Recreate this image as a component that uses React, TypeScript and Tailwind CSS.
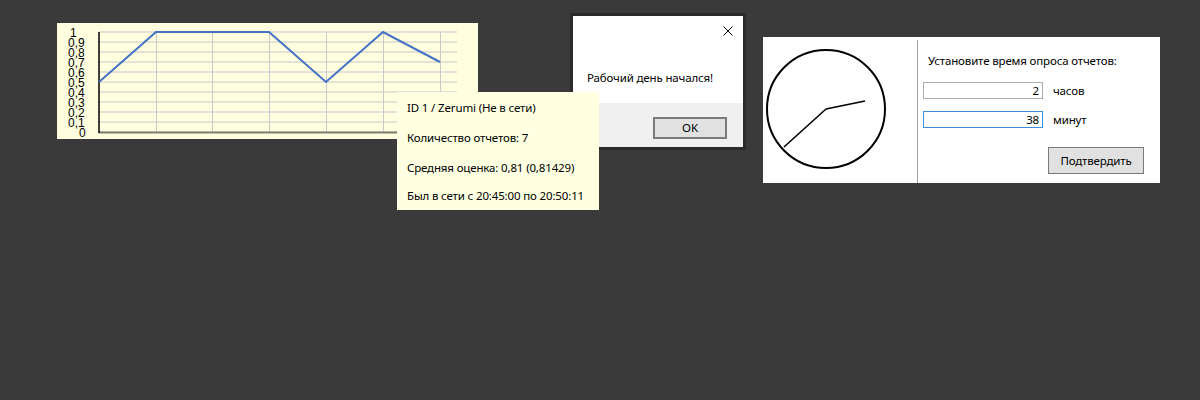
const FONT = { fontFamily: '"Noto Sans", "Open Sans", sans-serif' };

/** Chart values, one per vertical grid line. */
const POINTS = [0.5, 1, 1, 1, 0.5, 1, 0.7];
const GRID_X = [42, 99, 155, 212, 269, 326, 383];
const Y_LABELS = ['1', '0,9', '0,8', '0,7', '0,6', '0,5', '0,4', '0,3', '0,2', '0,1', '0'];

function ChartPanel() {
  const line = POINTS.map((v, i) => `${GRID_X[i]},${109 - v * 100}`).join(' ');
  return (
    <div className="absolute left-[57px] top-[23px] w-[421px] h-[116px] bg-[#ffffe0]">
      <svg width="421" height="116">
        {Y_LABELS.map((_, i) => (
          <line key={'h' + i} x1="42" x2="400" y1={9 + i * 10} y2={9 + i * 10} stroke="#e2e2d6" strokeWidth="2" />
        ))}
        {GRID_X.slice(1).map((x) => (
          <line key={'v' + x} x1={x + 0.5} x2={x + 0.5} y1="9" y2="109" stroke="#c9c9c9" strokeWidth="1" />
        ))}
        <line x1="42" x2="400" y1="109.5" y2="109.5" stroke="#7f7f70" strokeWidth="2" />
        <line x1="42" x2="42" y1="9" y2="110" stroke="#000" strokeWidth="1.5" />
        <polyline points={line} fill="none" stroke="#4472c4" strokeWidth="2" />
        {Y_LABELS.map((t, i) => (
          <text
            key={t}
            x={t === '1' ? 13 : t === '0' ? 22 : 11}
            y={9 + i * 10 + 4.5}
            fontSize="12"
            fill="#000"
            fontFamily='"Liberation Sans", Arial, sans-serif'
          >
            {t}
          </text>
        ))}
      </svg>
    </div>
  );
}

function MessageDialog() {
  return (
    <div className="absolute left-[570px] top-[13px] w-[176px] h-[137px] bg-[#2b2b2b] p-[3px]">
      <div className="flex flex-col w-full h-full bg-white">
        <div className="relative h-[87px]">
          <svg className="absolute left-[150px] top-[10px]" width="10" height="10">
            <path d="M0.5 0.5 L9.5 9.5 M9.5 0.5 L0.5 9.5" stroke="#000" strokeWidth="1" />
          </svg>
          <div className="absolute left-[14px] top-[54px] text-[11.5px] tracking-[-0.15px] leading-[16px] text-black">
            Рабочий день начался!
          </div>
        </div>
        <div className="flex-1 bg-[#f0f0f0] pt-[11px] pl-[80px]">
          <button className="w-[74px] h-[22px] bg-[#e1e1e1] border-2 border-[#7a7a7a] text-[11.5px] leading-none text-black">
            OK
          </button>
        </div>
      </div>
    </div>
  );
}

function InfoTooltip() {
  return (
    <div className="absolute left-[397px] top-[92px] w-[202px] h-[118px] bg-[#ffffe1] pl-[10px] pt-[8px] flex flex-col text-[11.5px] tracking-[-0.15px] leading-[16px] text-black">
      <div>ID 1 / Zerumi (Не в сети)</div>
      <div className="mt-[14px]">Количество отчетов: 7</div>
      <div className="mt-[14px]">Средняя оценка: 0,81 (0,81429)</div>
      <div className="mt-[12px]">Был в сети с 20:45:00 по 20:50:11</div>
    </div>
  );
}

function PollPanel() {
  return (
    <div className="absolute left-[763px] top-[37px] w-[397px] h-[146px] bg-white flex text-[11.5px] tracking-[-0.15px] leading-[16px] text-black">
      <div className="w-[154px] h-full">
        <svg width="154" height="146">
          <circle cx="63" cy="72" r="59" fill="none" stroke="#000" strokeWidth="2" />
          <line x1="63" y1="72" x2="102" y2="64" stroke="#000" strokeWidth="1.6" />
          <line x1="63" y1="72" x2="21" y2="110" stroke="#000" strokeWidth="1.6" />
        </svg>
      </div>
      <div className="mt-[3px] w-px bg-[#a0a0a0]" />
      <div className="flex flex-col pt-[16px]">
        <div className="pl-[10px]">Установите время опроса отчетов:</div>
        <div className="flex items-center pl-[5px] mt-[13px]">
          <div className="w-[120px] h-[17px] border border-[#adadad] text-right pr-[3px] leading-[15px]">2</div>
          <span className="ml-[10px]">часов</span>
        </div>
        <div className="flex items-center pl-[5px] mt-[12px]">
          <div className="w-[120px] h-[17px] border border-[#3c8fdc] text-right pr-[3px] leading-[15px]">38</div>
          <span className="ml-[10px]">минут</span>
        </div>
        <div className="pl-[130px] mt-[19px]">
          <button className="w-[96px] h-[27px] bg-[#e1e1e1] border border-[#7a7a7a] text-[11.5px] tracking-[-0.15px] text-black">
            Подтвердить
          </button>
        </div>
      </div>
    </div>
  );
}

export default function App() {
  return (
    <div className="relative w-[1200px] h-[400px] bg-[#3a3a3a] overflow-hidden" style={FONT}>
      <ChartPanel />
      <MessageDialog />
      <PollPanel />
      <InfoTooltip />
    </div>
  );
}
